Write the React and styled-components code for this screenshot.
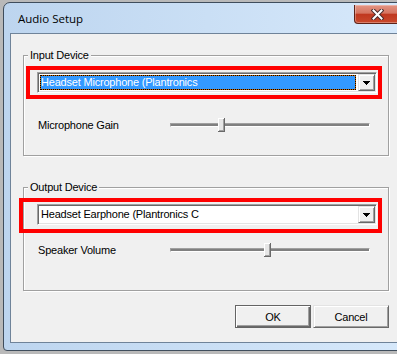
import React from 'react';
import styled, { createGlobalStyle } from 'styled-components';

const GlobalStyle = createGlobalStyle`
  html, body {
    margin: 0;
    padding: 0;
  }
  body {
    background: #b9b9b9;
    font-family: "Liberation Sans", Arial, sans-serif;
    overflow: hidden;
  }
`;

const Desktop = styled.div`
  width: 397px;
  height: 354px;
  box-sizing: border-box;
  padding: 2px 0 0 3px;
  overflow: hidden;
`;

const Window = styled.div`
  width: 410px;
  height: 349px;
  box-sizing: border-box;
  display: flex;
  flex-direction: column;
  border: 1px solid #3f4d5c;
  border-radius: 7px 7px 4px 4px;
  padding: 0 6px 7px 6px;
  background: linear-gradient(to right, #bdd5ef, #d7e9fb);
`;

const TitleBar = styled.div`
  height: 30px;
  display: flex;
  align-items: flex-start;
  flex-shrink: 0;
`;

const Title = styled.span`
  margin: 8px 0 0 8px;
  font-family: "Open Sans", "Noto Sans", sans-serif;
  font-size: 11.5px;
  line-height: 16px;
  color: #000;
`;

const CloseButton = styled.div`
  margin: 2px 6px 0 auto;
  width: 46px;
  height: 19px;
  box-sizing: border-box;
  display: flex;
  align-items: center;
  justify-content: center;
  border: 1px solid #5e2218;
  border-top: none;
  border-radius: 0 0 4px 4px;
  background: linear-gradient(#e39584 0%, #d57460 45%, #c0381f 52%, #c9492c 100%);
  box-shadow: inset 0 0 0 1px rgba(255, 255, 255, 0.3);
`;

const Client = styled.div`
  height: 310px;
  box-sizing: border-box;
  border: 1px solid #6f8399;
  background: #f0f0f0;
  padding: 21px 0 0 12px;
`;

const GroupBox = styled.div`
  position: relative;
  width: 366px;
  box-sizing: border-box;
  border: 1px solid #a0a0a0;
  box-shadow: 1px 1px 0 #fff, inset 1px 1px 0 #fff;
  margin-top: ${(p) => p.$top}px;
  padding: 10px 0 ${(p) => p.$bottom}px 0;
`;

const Legend = styled.span`
  position: absolute;
  top: -7px;
  left: 4px;
  padding: 0 2px;
  background: #f0f0f0;
  font-size: 11px;
  line-height: 13px;
  letter-spacing: -0.2px;
  color: #000;
`;

const RedFrame = styled.div`
  box-sizing: border-box;
  width: ${(p) => p.$width}px;
  margin-left: ${(p) => p.$offset}px;
  border: 4px solid #ff0000;
  padding: ${(p) => p.$pad};
`;

const Combo = styled.div`
  width: 340px;
  height: 21px;
  box-sizing: border-box;
  display: flex;
  align-items: flex-start;
  gap: 1px;
  padding: 1px;
  border: 1px solid;
  border-color: #a0a0a0 #fff #fff #a0a0a0;
  box-shadow: inset 1px 1px 0 #696969, inset -1px -1px 0 #e3e3e3;
  background: #fff;
`;

const ComboField = styled.div`
  flex: 1;
  height: 15px;
  margin: 1px;
  box-sizing: border-box;
  border: 1px ${(p) => (p.$selected ? 'dotted #000' : 'solid transparent')};
  background: ${(p) =>
    p.$selected ? 'linear-gradient(#3399ff, #3399ff) padding-box, #cc6600 border-box' : 'transparent'};
  color: ${(p) => (p.$selected ? '#fff' : '#000')};
  font-size: 11px;
  line-height: 13px;
  letter-spacing: -0.2px;
  white-space: nowrap;
  overflow: hidden;
`;

const DropButton = styled.div`
  width: 17px;
  height: 17px;
  box-sizing: border-box;
  display: flex;
  align-items: center;
  justify-content: center;
  background: #f0f0f0;
  border: 1px solid;
  border-color: #e3e3e3 #696969 #696969 #e3e3e3;
  box-shadow: inset 1px 1px 0 #fff, inset -1px -1px 0 #a0a0a0;
`;

const SliderRow = styled.div`
  display: flex;
  align-items: center;
  height: 14px;
  margin-top: ${(p) => p.$top}px;
  padding-left: 14px;
`;

const Label = styled.span`
  width: 132px;
  font-size: 11px;
  line-height: 13px;
  letter-spacing: -0.2px;
  color: #000;
`;

const Slider = styled.div`
  position: relative;
  width: 200px;
  height: 14px;
  display: flex;
  align-items: center;
`;

const Track = styled.div`
  width: 100%;
  height: 4px;
  box-sizing: border-box;
  margin-top: -1px;
  border: 1px solid;
  border-color: #a0a0a0 #fff #fff #a0a0a0;
  background: #808080;
`;

const Thumb = styled.div`
  position: absolute;
  top: 0;
  width: 7px;
  height: 14px;
  box-sizing: border-box;
  background: #e6e6e6;
  border-right: 1px solid #696969;
  border-bottom: 1px solid #696969;
  box-shadow: inset 1px 1px 0 #fff, inset -1px -1px 0 #a0a0a0;
`;

const ButtonRow = styled.div`
  width: 366px;
  display: flex;
  justify-content: flex-end;
  gap: 2px;
  margin-top: 14px;
`;

const Button = styled.button`
  width: 76px;
  height: 23px;
  box-sizing: border-box;
  padding: 0;
  font-family: "Liberation Sans", Arial, sans-serif;
  font-size: 11px;
  letter-spacing: -0.2px;
  color: #000;
  background: #f0f0f0;
  border: 1px solid;
  border-color: ${(p) => (p.$default ? '#646464' : '#e3e3e3 #696969 #696969 #e3e3e3')};
  box-shadow: ${(p) =>
    p.$default
      ? 'inset 1px 1px 0 #fff, inset -1px -1px 0 #696969, inset -2px -2px 0 #a0a0a0'
      : 'inset 1px 1px 0 #fff, inset -1px -1px 0 #a0a0a0'};
`;

const CloseGlyph = () => (
  <svg width="13" height="11" viewBox="0 0 13 11">
    <path d="M2.5 1.5 L10.5 9.5 M10.5 1.5 L2.5 9.5" stroke="#4a2a2a" strokeWidth="4" strokeLinecap="square" />
    <path d="M2.5 1.5 L10.5 9.5 M10.5 1.5 L2.5 9.5" stroke="#fff" strokeWidth="2" strokeLinecap="square" />
  </svg>
);

const Arrow = () => (
  <svg width="7" height="4" viewBox="0 0 7 4" shapeRendering="crispEdges">
    <path d="M0 0h7v1H0zM1 1h5v1H1zM2 2h3v1H2zM3 3h1v1H3z" fill="#000" />
  </svg>
);

const ComboBox = ({ value, selected }) => (
  <Combo>
    <ComboField $selected={selected}>{value}</ComboField>
    <DropButton>
      <Arrow />
    </DropButton>
  </Combo>
);

const SliderField = ({ label, value, top }) => (
  <SliderRow $top={top}>
    <Label>{label}</Label>
    <Slider>
      <Track />
      <Thumb style={{ left: value }} />
    </Slider>
  </SliderRow>
);

export default function App() {
  return (
    <>
      <GlobalStyle />
      <Desktop>
        <Window>
          <TitleBar>
            <Title>Audio Setup</Title>
            <CloseButton>
              <CloseGlyph />
            </CloseButton>
          </TitleBar>
          <Client>
            <GroupBox $top={0} $bottom={23}>
              <Legend>Input Device</Legend>
              <RedFrame $width={356} $offset={2} $pad="2px 1px 2px 7px">
                <ComboBox value="Headset Microphone (Plantronics" selected />
              </RedFrame>
              <SliderField label="Microphone Gain" value={48} top={19} />
            </GroupBox>
            <GroupBox $top={31} $bottom={33}>
              <Legend>Output Device</Legend>
              <RedFrame $width={363} $offset={-5} $pad="2px 1px 4px 14px">
                <ComboBox value="Headset Earphone (Plantronics C" />
              </RedFrame>
              <SliderField label="Speaker Volume" value={94} top={10} />
            </GroupBox>
            <ButtonRow>
              <Button $default>OK</Button>
              <Button>Cancel</Button>
            </ButtonRow>
          </Client>
        </Window>
      </Desktop>
    </>
  );
}
